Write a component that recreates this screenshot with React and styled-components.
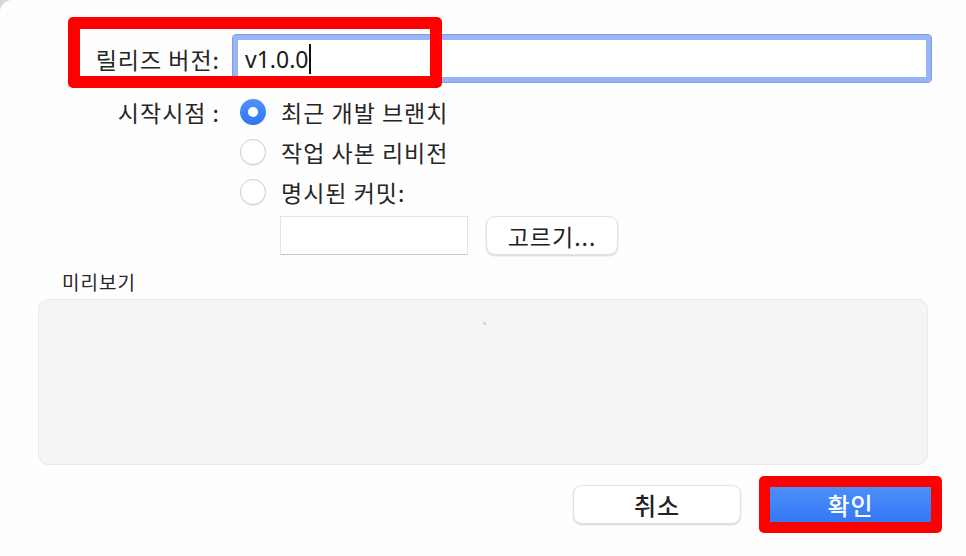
import React from 'react'
import styled, { createGlobalStyle } from 'styled-components'

const GlobalStyle = createGlobalStyle`
    html, body {
        margin: 0;
        padding: 0;
        background: #d9d9d9;
    }
    body {
        font-family: "Noto Sans CJK KR", "Noto Sans", sans-serif;
        color: #262626;
    }
`

function Radio({ checked, children }) {
    return (
        <RadioRow>
            <RadioDot checked={checked} />
            <RadioText>{children}</RadioText>
        </RadioRow>
    )
}

function App() {
    return (
        <>
            <GlobalStyle />
            <Dialog>
                <VersionRow>
                    <Label>릴리즈 버전:</Label>
                    <VersionInput>
                        <span>v1.0.0</span>
                        <Caret />
                    </VersionInput>
                    <Highlight />
                </VersionRow>

                <StartGrid>
                    <Label>시작시점 :</Label>
                    <Options>
                        <Radio checked>최근 개발 브랜치</Radio>
                        <Radio>작업 사본 리비전</Radio>
                        <Radio>명시된 커밋:</Radio>
                        <PickerRow>
                            <CommitInput />
                            <Button>고르기...</Button>
                        </PickerRow>
                    </Options>
                </StartGrid>

                <PreviewTitle>미리보기</PreviewTitle>
                <PreviewBox>
                    <Speck />
                </PreviewBox>

                <Footer>
                    <Button wide>취소</Button>
                    <Outline>
                        <PrimaryButton>확인</PrimaryButton>
                    </Outline>
                </Footer>
            </Dialog>
        </>
    )
}

export default App

const Dialog = styled.div`
    width: 966px;
    height: 556px;
    box-sizing: border-box;
    background: #fefefe;
    border-top-left-radius: 12px;
    padding: 34px 34px 0 38px;
    display: flex;
    flex-direction: column;
`

const Label = styled.div`
    font-size: 23px;
    letter-spacing: 1px;
    color: #262626;
    text-align: right;
    white-space: nowrap;
`

const VersionRow = styled.div`
    position: relative;
    display: grid;
    grid-template-columns: 182px 1fr;
    column-gap: 12px;
    align-items: center;
    height: 49px;
`

const VersionInput = styled.div`
    height: 49px;
    box-sizing: border-box;
    border: 1px solid #7f9ee8;
    border-radius: 4px;
    box-shadow: inset 0 0 0 5px #97b5f4;
    display: flex;
    align-items: center;
    padding-left: 12px;
    font-family: "Noto Sans", sans-serif;
    font-size: 23px;
    color: #1a1a1a;
    background: #fff;
`

const Caret = styled.span`
    display: inline-block;
    width: 2px;
    height: 30px;
    background: #111;
    margin-left: 1px;
`

const Highlight = styled.div`
    position: absolute;
    left: 30px;
    top: -17px;
    width: 374px;
    height: 71px;
    box-sizing: border-box;
    border: 12px solid #ff0000;
    border-radius: 5px;
    pointer-events: none;
`

const StartGrid = styled.div`
    display: grid;
    grid-template-columns: 182px 1fr;
    column-gap: 20px;
    margin-top: 16px;
    ${Label} {
        line-height: 26px;
        margin-top: 0;
    }
`

const Options = styled.div`
    display: flex;
    flex-direction: column;
    gap: 14px;
`

const RadioRow = styled.div`
    display: flex;
    align-items: center;
    gap: 15px;
    height: 26px;
`

const RadioDot = styled.span`
    width: 26px;
    height: 26px;
    box-sizing: border-box;
    border-radius: 50%;
    flex-shrink: 0;
    background: ${p => p.checked ? 'linear-gradient(#4f93f8, #2f76f2)' : '#fff'};
    border: ${p => p.checked ? 'none' : '1px solid #cfcfcf'};
    box-shadow: ${p => p.checked ? 'none' : '0 1px 1px rgba(0,0,0,0.08)'};
    display: flex;
    align-items: center;
    justify-content: center;
    &::after {
        content: '';
        display: ${p => p.checked ? 'block' : 'none'};
        width: 10px;
        height: 10px;
        border-radius: 50%;
        background: #fff;
    }
`

const RadioText = styled.span`
    font-size: 23px;
    letter-spacing: 1px;
    color: #262626;
`

const PickerRow = styled.div`
    display: flex;
    align-items: center;
    gap: 18px;
    padding-left: 40px;
    margin-top: -3px;
`

const CommitInput = styled.div`
    width: 188px;
    height: 39px;
    box-sizing: border-box;
    background: #fff;
    border: 1px solid #e4e4e4;
    border-bottom-color: #c4c4c4;
`

const Button = styled.div`
    width: ${p => p.wide ? '168px' : '132px'};
    height: 39px;
    box-sizing: border-box;
    border-radius: 9px;
    background: #fff;
    border: 1px solid #e2e2e2;
    box-shadow: 0 1px 2px rgba(0,0,0,0.18);
    display: flex;
    align-items: center;
    justify-content: center;
    font-size: ${p => p.wide ? '24px' : '23px'};
    font-weight: ${p => p.wide ? 500 : 400};
    letter-spacing: 1px;
    color: #222;
`

const PreviewTitle = styled.div`
    font-size: 19px;
    letter-spacing: 1px;
    color: #262626;
    margin: 14px 0 0 24px;
    line-height: 26px;
`

const PreviewBox = styled.div`
    position: relative;
    margin-top: 4px;
    width: 890px;
    height: 166px;
    box-sizing: border-box;
    background: #f5f5f5;
    border: 1px solid #e9e9e9;
    border-radius: 10px;
`

const Speck = styled.span`
    position: absolute;
    left: 444px;
    top: 22px;
    width: 3px;
    height: 3px;
    background: #d8d8d8;
`

const Footer = styled.div`
    display: flex;
    justify-content: flex-end;
    align-items: center;
    gap: 18px;
    margin-top: 11px;
    margin-right: -10px;
`

const Outline = styled.div`
    border: 11px solid #ff0000;
    border-radius: 5px;
    display: flex;
`

const PrimaryButton = styled.div`
    width: 161px;
    height: 35px;
    background: linear-gradient(#4c8ff8, #3577f5);
    display: flex;
    align-items: center;
    justify-content: center;
    font-size: 24px;
    font-weight: 500;
    letter-spacing: 1px;
    color: #fff;
`
